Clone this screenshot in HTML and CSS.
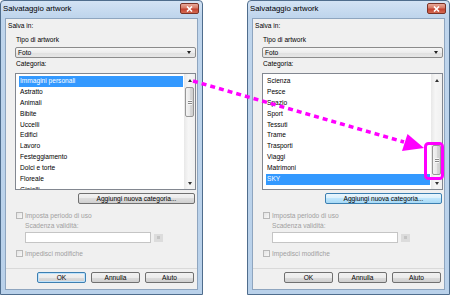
FILE: index.html
```html
<!DOCTYPE html>
<html lang="it">

<head>
  <meta charset="UTF-8">
  <meta name="viewport" content="width=device-width, initial-scale=1.0">
  <title>Salvataggio artwork</title>
  <link rel="stylesheet" href="styles.css">
</head>

<body>
  <div class="stage">

    <!-- Dialog 1: list scrolled to top -->
    <div class="dialog">
      <div class="titlebar">
        <span class="title">Salvataggio artwork</span>
        <span class="close">
          <svg width="7" height="6" viewBox="0 0 7 6"><path d="M1 0.5 L6 5.5 M6 0.5 L1 5.5" stroke="#fff" stroke-width="1.6" /></svg>
        </span>
      </div>
      <div class="client">
        <div class="caption">Salva in:</div>
        <div class="group">
          <div class="label">Tipo di artwork</div>
          <div class="combo"><span>Foto</span><span class="combo-arrow"></span></div>
          <div class="label">Categoria:</div>
          <div class="listbox">
            <ul class="items">
              <li class="selected">Immagini personali</li>
              <li>Astratto</li>
              <li>Animali</li>
              <li>Bibite</li>
              <li>Uccelli</li>
              <li>Edifici</li>
              <li>Lavoro</li>
              <li>Festeggiamento</li>
              <li>Dolci e torte</li>
              <li>Floreale</li>
              <li>Gioielli</li>
            </ul>
            <div class="scrollbar">
              <span class="arrow"><span class="tri up"></span></span>
              <div class="track"><div class="thumb"><span class="grip"></span></div></div>
              <span class="arrow"><span class="tri down"></span></span>
            </div>
          </div>
          <div class="add-row"><button class="btn add">Aggiungi nuova categoria...</button></div>
        </div>
        <div class="check-row"><span class="check"></span><span>Imposta periodo di uso</span></div>
        <div class="sub-label">Scadenza validità:</div>
        <div class="input-row"><span class="textbox"></span><span class="pick"><span></span></span></div>
        <div class="check-row second"><span class="check"></span><span>Impedisci modifiche</span></div>
        <div class="footer">
          <button class="btn default">OK</button>
          <button class="btn">Annulla</button>
          <button class="btn">Aiuto</button>
        </div>
      </div>
    </div>

    <!-- Dialog 2: list scrolled to bottom -->
    <div class="dialog">
      <div class="titlebar">
        <span class="title">Salvataggio artwork</span>
        <span class="close">
          <svg width="7" height="6" viewBox="0 0 7 6"><path d="M1 0.5 L6 5.5 M6 0.5 L1 5.5" stroke="#fff" stroke-width="1.6" /></svg>
        </span>
      </div>
      <div class="client">
        <div class="caption">Salva in:</div>
        <div class="group">
          <div class="label">Tipo di artwork</div>
          <div class="combo"><span>Foto</span><span class="combo-arrow"></span></div>
          <div class="label">Categoria:</div>
          <div class="listbox">
            <ul class="items">
              <li>Scienza</li>
              <li>Pesce</li>
              <li>Spazio</li>
              <li>Sport</li>
              <li>Tessuti</li>
              <li>Trame</li>
              <li>Trasporti</li>
              <li>Viaggi</li>
              <li>Matrimoni</li>
              <li class="selected">SKY</li>
            </ul>
            <div class="scrollbar">
              <span class="arrow"><span class="tri up"></span></span>
              <div class="track"><div class="thumb at-end"><span class="grip"></span></div></div>
              <span class="arrow"><span class="tri down"></span></span>
            </div>
          </div>
          <div class="add-row"><button class="btn add hover">Aggiungi nuova categoria...</button></div>
        </div>
        <div class="check-row"><span class="check"></span><span>Imposta periodo di uso</span></div>
        <div class="sub-label">Scadenza validità:</div>
        <div class="input-row"><span class="textbox"></span><span class="pick"><span></span></span></div>
        <div class="check-row second"><span class="check"></span><span>Impedisci modifiche</span></div>
        <div class="footer">
          <button class="btn">OK</button>
          <button class="btn">Annulla</button>
          <button class="btn">Aiuto</button>
        </div>
      </div>
    </div>

    <!-- annotation: where the scrollbar thumb went -->
    <svg class="annotation" width="450" height="296" viewBox="0 0 450 296">
      <line x1="193" y1="81" x2="404" y2="142" stroke="#f0f" stroke-width="3.5" stroke-dasharray="5 4" />
      <polygon points="424,148 402,151 407.5,134" fill="#f0f" />
      <rect x="425.5" y="143.5" width="17" height="35" rx="3" fill="none" stroke="#f0f" stroke-width="3" />
    </svg>
  </div>
</body>

</html>
```

FILE: styles.css
```css
* {
  box-sizing: border-box;
}

body {
  margin: 0;
  background: #fff;
  font-family: "Liberation Sans", Arial, sans-serif;
  font-size: 6.6px;
  color: #000;
}

.stage {
  position: relative;
  width: 450px;
  height: 296px;
  display: flex;
  gap: 44px;
}

/* window frame */
.dialog {
  width: 203px;
  height: 295px;
  display: flex;
  flex-direction: column;
  border: 1px solid #4f6d8d;
  border-radius: 4px 4px 0 0;
  background: linear-gradient(#d3e3f4, #bfd5ec 16px, #b9d1ea);
}

.titlebar {
  height: 17px;
  display: flex;
  align-items: flex-start;
  padding-left: 2px;
}

.title {
  font-size: 7.8px;
  line-height: 16px;
}

.close {
  margin: 2px 3px 0 auto;
  width: 19px;
  height: 11px;
  display: flex;
  align-items: center;
  justify-content: center;
  border: 1px solid #7b3226;
  border-radius: 2px;
  background: linear-gradient(#e8a898, #d77a66 45%, #c4412f 55%, #d36a52);
}

.client {
  flex: 1;
  margin: 0 4px 4px;
  display: flex;
  flex-direction: column;
  border: 1px solid #8ea5bf;
  background: #f0f0f0;
}

.caption {
  margin: 2px 0 0 2px;
  line-height: 9px;
}

.group {
  display: flex;
  flex-direction: column;
  padding: 0 1px 0 9px;
}

.label {
  margin-top: 5px;
  padding-left: 1px;
  line-height: 9px;
}

.combo + .label {
  margin-top: 1px;
}

.combo {
  margin-top: 3px;
  height: 11px;
  display: flex;
  align-items: center;
  justify-content: space-between;
  padding: 0 4px 0 2px;
  border: 1px solid #8b8b8b;
  border-radius: 2px;
  background: linear-gradient(#f7f7f7, #ececec 50%, #dfdfdf 50%, #e6e6e6);
}

.combo-arrow {
  width: 0;
  height: 0;
  border-left: 2.5px solid transparent;
  border-right: 2.5px solid transparent;
  border-top: 3px solid #222;
}

/* list box */
.listbox {
  margin-top: 5px;
  height: 117px;
  display: flex;
  border: 1px solid #828790;
  background: #fff;
  overflow: hidden;
}

.items {
  flex: 1;
  margin: 0;
  padding: 2px 1px 0 3px;
  list-style: none;
}

.items li {
  height: 10.9px;
  line-height: 10.9px;
  padding-left: 1px;
  white-space: nowrap;
}

.items li.selected {
  background: #3399ff;
  color: #fff;
}

.scrollbar {
  width: 11px;
  display: flex;
  flex-direction: column;
  background: linear-gradient(90deg, #e8e8e8, #f6f6f6 40%, #f0f0f0);
}

.arrow {
  height: 12px;
  display: flex;
  align-items: center;
  justify-content: center;
}

.tri {
  width: 0;
  height: 0;
  border-left: 2.5px solid transparent;
  border-right: 2.5px solid transparent;
}

.tri.up {
  border-bottom: 3px solid #333;
}

.tri.down {
  border-top: 3px solid #333;
}

.track {
  flex: 1;
  padding: 0 1px 0 1px;
}

.thumb {
  margin-top: 1px;
  height: 30px;
  display: flex;
  align-items: center;
  justify-content: center;
  border: 1px solid #979797;
  border-radius: 2px;
  background: linear-gradient(90deg, #f4f4f4, #e9e9e9 50%, #d9d9d9 50%, #cfcfcf);
}

.thumb.at-end {
  margin-top: 59px;
}

.grip {
  width: 4px;
  height: 5px;
  background: repeating-linear-gradient(#f8f8f8 0 1px, #888 1px 2px);
}

/* buttons */
.btn {
  margin: 0;
  padding: 0;
  height: 11px;
  width: 49px;
  font: inherit;
  line-height: 9px;
  color: #000;
  border: 1px solid #707070;
  border-radius: 2px;
  background: linear-gradient(#f2f2f2, #ebebeb 50%, #dddddd 50%, #cfcfcf);
}

.btn.default {
  border-color: #3c7fb1;
  box-shadow: inset 0 0 0 1px #bfe3fc;
}

.btn.hover {
  border-color: #3c7fb1;
  background: linear-gradient(#eaf6fd, #d9f0fc 50%, #bee6fd 50%, #a7d9f5);
}

.add-row {
  margin-top: 3px;
  display: flex;
  justify-content: flex-end;
  padding-right: 1px;
}

.btn.add {
  width: 117px;
}

/* disabled controls */
.check-row {
  margin-top: 7px;
  height: 9px;
  display: flex;
  align-items: center;
  gap: 2px;
  padding-left: 10px;
  color: #a0a0a0;
}

.check-row.second {
  margin-top: 6px;
}

.check {
  width: 7px;
  height: 7px;
  border: 1px solid #b8b8b8;
  background: linear-gradient(135deg, #e4e4e4, #f7f7f7);
}

.sub-label {
  margin-top: 1px;
  padding-left: 19px;
  line-height: 9px;
  color: #a0a0a0;
}

.input-row {
  margin-top: 2px;
  display: flex;
  align-items: center;
  padding-left: 19px;
}

.textbox {
  width: 126px;
  height: 11px;
  border: 1px solid #c5c5c5;
  background: #fff;
}

.pick {
  margin-left: 3px;
  width: 9px;
  height: 8px;
  display: flex;
  align-items: center;
  justify-content: center;
  background: #dcdcdc;
}

.pick span {
  width: 3px;
  height: 3px;
  background: #c4c4c4;
}

.footer {
  margin-top: auto;
  display: flex;
  justify-content: flex-end;
  gap: 5px;
  padding: 3px 3px 6px 0;
  border-top: 1px solid #d9d9d9;
}

.annotation {
  position: absolute;
  top: 0;
  left: 0;
  pointer-events: none;
}
```
